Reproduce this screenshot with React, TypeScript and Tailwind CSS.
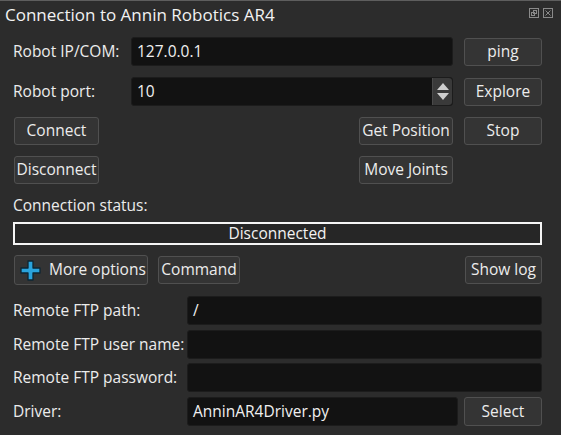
import React from 'react';

const font = { fontFamily: '"Open Sans", "Noto Sans", sans-serif' };

function Btn({ children, className = '' }: { children: React.ReactNode; className?: string }) {
  return (
    <button
      className={`h-[28px] bg-[#343434] border border-[#505050] rounded-[3px] text-[15.5px] text-[#ececec] flex items-center justify-center leading-none ${className}`}
    >
      {children}
    </button>
  );
}

function Field({ value = '', className = '' }: { value?: string; className?: string }) {
  return (
    <div
      className={`h-[29px] bg-[#121212] border border-[#1c1c1c] rounded-[3px] px-[5px] flex items-center text-[15.5px] text-[#f0f0f0] ${className}`}
    >
      {value}
    </div>
  );
}

export default function App() {
  return (
    <div style={font} className="w-[561px] h-[435px] bg-[#2c2c2c] border-t border-[#5e5e5e] text-[#ececec] overflow-hidden">
      <div className="h-[27px] flex items-center justify-between pl-[5px] pr-[8px]">
        <span className="text-[17px] text-[#f2f2f2]">Connection to Annin Robotics AR4</span>
        <div className="flex gap-[4px] -mt-[4px]">
          <svg width="10" height="10" viewBox="0 0 10 10" fill="none" stroke="#8a8a8a" strokeWidth="1">
            <rect x="0.5" y="0.5" width="9" height="9" />
            <rect x="4.5" y="2.5" width="3" height="3" />
            <rect x="2.5" y="4.5" width="3" height="3" />
          </svg>
          <svg width="10" height="10" viewBox="0 0 10 10" fill="none" stroke="#8a8a8a" strokeWidth="1">
            <rect x="0.5" y="0.5" width="9" height="9" />
            <path d="M2.5 2.5 L7.5 7.5 M7.5 2.5 L2.5 7.5" />
          </svg>
        </div>
      </div>

      <div className="pl-[13px] pr-[19px]">
        <div className="mt-[9px] flex items-center">
          <span className="w-[118px] text-[15.5px]">Robot IP/COM:</span>
          <Field value="127.0.0.1" className="flex-1" />
          <Btn className="ml-[11px] w-[78px]">ping</Btn>
        </div>

        <div className="mt-[11px] flex items-center">
          <span className="w-[118px] text-[15.5px]">Robot port:</span>
          <div className="flex-1 h-[29px] bg-[#121212] border border-[#1c1c1c] rounded-[3px] flex">
            <span className="flex-1 pl-[5px] flex items-center text-[15.5px] text-[#f0f0f0]">10</span>
            <div className="w-[20px] bg-[#3a3a3a] rounded-r-[3px] border-l border-[#4a4a4a] flex flex-col items-center justify-center gap-[3px]">
              <svg width="12" height="7" viewBox="0 0 12 7"><path d="M6 0 L12 7 L0 7 Z" fill="#cfcfcf" /></svg>
              <svg width="12" height="7" viewBox="0 0 12 7"><path d="M0 0 L12 0 L6 7 Z" fill="#cfcfcf" /></svg>
            </div>
          </div>
          <Btn className="ml-[11px] w-[78px]">Explore</Btn>
        </div>

        <div className="mt-[11px] flex items-center">
          <Btn className="ml-px w-[85px]">Connect</Btn>
          <div className="flex-1" />
          <Btn className="w-[94px]">Get Position</Btn>
          <Btn className="ml-[11px] w-[78px]">Stop</Btn>
        </div>

        <div className="mt-[11px] flex items-center">
          <Btn className="ml-px w-[85px]">Disconnect</Btn>
          <div className="flex-1" />
          <Btn className="w-[94px]">Move Joints</Btn>
          <div className="ml-[11px] w-[78px]" />
        </div>

        <div className="mt-[11px] text-[15.5px] leading-[20px]">Connection status:</div>

        <div className="mt-[7px] h-[23px] border-2 border-[#f5f5f5] bg-[#262626] flex items-center justify-center text-[15.5px] text-[#f2f2f2]">
          Disconnected
        </div>

        <div className="mt-[10px] flex items-center">
          <Btn className="ml-px w-[134px] h-[30px] gap-[8px] justify-start pl-[5px]">
            <svg width="21" height="21" viewBox="0 0 21 21">
              <path
                d="M8 1 H13 V8 H20 V13 H13 V20 H8 V13 H1 V8 H8 Z"
                fill="#2aa3dc"
                stroke="#0d2633"
                strokeWidth="1.3"
                strokeLinejoin="round"
              />
            </svg>
            More options
          </Btn>
          <Btn className="ml-[10px] w-[82px]">Command</Btn>
          <div className="flex-1" />
          <Btn className="w-[77px]">Show log</Btn>
        </div>

        <div className="mt-[11px] flex items-center">
          <span className="w-[174px] text-[15.5px]">Remote FTP path:</span>
          <Field value="/" className="flex-1" />
        </div>
        <div className="mt-[5px] flex items-center">
          <span className="w-[174px] text-[15.5px] whitespace-nowrap">Remote FTP user name:</span>
          <Field className="flex-1" />
        </div>
        <div className="mt-[4px] flex items-center">
          <span className="w-[174px] text-[15.5px]">Remote FTP password:</span>
          <Field className="flex-1" />
        </div>
        <div className="mt-[5px] flex items-center">
          <span className="w-[174px] text-[15.5px]">Driver:</span>
          <Field value="AnninAR4Driver.py" className="flex-1" />
          <Btn className="ml-[6px] w-[78px] h-[29px]">Select</Btn>
        </div>
      </div>
    </div>
  );
}
